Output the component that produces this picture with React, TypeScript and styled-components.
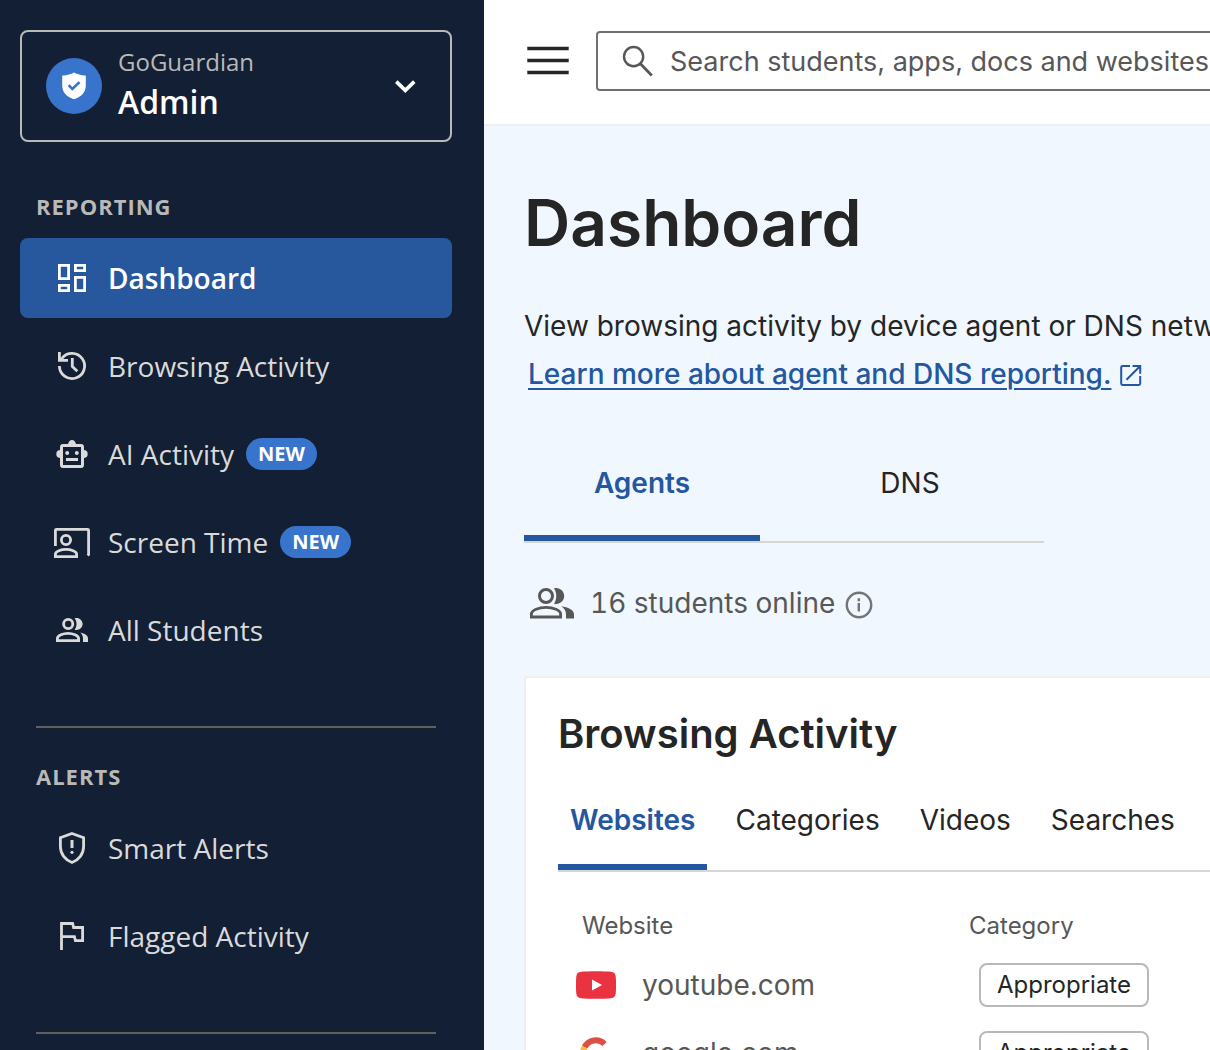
import React from "react";
import styled, { createGlobalStyle, css } from "styled-components";

const color = {
  navy: "#131f34",
  navyActive: "#27589d",
  badge: "#3874cb",
  sideText: "#dadada",
  sideMuted: "#b9b9b7",
  sideLine: "#5f5f5d",
  page: "#f0f7ff",
  ink: "#252525",
  soft: "#575757",
  link: "#24579f",
  line: "#d6d6d6",
};

const sideFont = `"Open Sans", "Noto Sans", sans-serif`;
const mainFont = `Inter, "Liberation Sans", sans-serif`;

const GlobalStyle = createGlobalStyle`
  *, *::before, *::after { box-sizing: border-box; }
  body { margin: 0; background: ${color.page}; }
  h1, h2, p, ul { margin: 0; padding: 0; }
  ul { list-style: none; }
  button { background: none; border: 0; padding: 0; font: inherit; color: inherit; cursor: pointer; }
  svg { display: block; flex: none; }
`;

const Shell = styled.div`
  display: flex;
  height: 100vh;
  overflow: hidden;
`;

/* Sidebar */

const Sidebar = styled.aside`
  flex: none;
  width: 484px;
  padding: 30px 32px 0 20px;
  overflow: hidden;
  background: ${color.navy};
  color: ${color.sideText};
  font-family: ${sideFont};
`;

const Switcher = styled.button`
  display: flex;
  align-items: center;
  gap: 16px;
  width: 100%;
  height: 112px;
  padding: 0 24px;
  border: 2px solid ${color.sideMuted};
  border-radius: 8px;
  text-align: left;
`;

const SwitcherText = styled.span`
  display: flex;
  flex: 1;
  flex-direction: column;
  padding-bottom: 4px;
`;

const Brand = styled.span`
  color: ${color.sideMuted};
  font-size: 24px;
  line-height: 36px;
`;

const Product = styled.span`
  color: #fff;
  font-size: 32px;
  font-weight: 600;
  line-height: 44px;
`;

const Section = styled.section<{ $first?: boolean }>`
  padding-top: ${(p) => (p.$first ? "48px" : "32px")};
`;

const SectionLabel = styled.h2`
  margin-bottom: 16px;
  padding-left: 16px;
  color: ${color.sideMuted};
  font-size: 22px;
  font-weight: 700;
  letter-spacing: 1px;
  line-height: 32px;
  text-transform: uppercase;
`;

const NavList = styled.ul`
  display: flex;
  flex-direction: column;
  gap: 8px;
`;

const NavLink = styled.a<{ $active?: boolean }>`
  display: flex;
  align-items: center;
  gap: 16px;
  height: 80px;
  padding: 0 32px;
  border-radius: 8px;
  color: inherit;
  font-size: 28px;
  line-height: 40px;
  text-decoration: none;
  white-space: nowrap;
  ${(p) =>
    p.$active &&
    css`
      background: ${color.navyActive};
      color: #fff;
      font-weight: 600;
    `}
`;

const NavLabel = styled.span`
  display: flex;
  align-items: center;
  gap: 12px;
`;

const NewBadge = styled.span`
  padding: 0 12px;
  border-radius: 16px;
  background: ${color.badge};
  color: #fff;
  font-size: 20px;
  font-weight: 700;
  line-height: 32px;
`;

const Divider = styled.hr`
  height: 2px;
  margin: 56px 16px 0;
  border: 0;
  background: ${color.sideLine};
`;

/* Main column */

const Main = styled.div`
  flex: 1;
  min-width: 0;
  overflow: hidden;
  background: ${color.page};
  color: ${color.ink};
  font-family: ${mainFont};
  font-size: 28px;
`;

const TopBar = styled.header`
  display: flex;
  align-items: center;
  gap: 24px;
  min-width: 1000px;
  padding: 31px 40px 33px;
  border-bottom: 2px solid #eeefef;
  background: #fff;
`;

const SearchBox = styled.label`
  display: flex;
  flex: 1;
  align-items: center;
  gap: 16px;
  height: 60px;
  padding: 0 24px;
  border: 2px solid #707070;
  border-radius: 4px;
  color: ${color.soft};
`;

const SearchInput = styled.input`
  flex: 1;
  min-width: 0;
  padding: 0;
  border: 0;
  outline: 0;
  background: none;
  color: ${color.ink};
  font: 27px ${mainFont};
  &::placeholder {
    color: ${color.soft};
    opacity: 1;
  }
`;

const Content = styled.main`
  min-width: 1000px;
  padding: 53px 40px;
`;

const PageTitle = styled.h1`
  font-size: 64px;
  font-weight: 600;
  line-height: 88px;
`;

const Intro = styled.p`
  margin-top: 35px;
  line-height: 48px;
`;

const LearnMore = styled.a`
  display: inline-flex;
  align-items: center;
  gap: 8px;
  margin-left: 4px;
  color: ${color.link};
  font-weight: 500;
  text-decoration: underline;
  text-decoration-thickness: 2px;
  text-underline-offset: 4px;
`;

const TabBar = styled.div<{ $wide?: boolean }>`
  display: flex;
  gap: ${(p) => (p.$wide ? "32px" : "16px")};
  width: ${(p) => (p.$wide ? "520px" : "auto")};
  margin-top: ${(p) => (p.$wide ? "49px" : "42px")};
  border-bottom: 2px solid ${color.line};
`;

const Tab = styled.button<{ $active?: boolean; $wide?: boolean }>`
  width: ${(p) => (p.$wide ? "236px" : "auto")};
  padding: ${(p) => (p.$wide ? "16px 12px 32px" : "0 12px 24px")};
  border-bottom: 6px solid transparent;
  line-height: 40px;
  ${(p) =>
    p.$active &&
    css`
      border-color: ${color.link};
      color: ${color.link};
      font-weight: 600;
    `}
`;

const Online = styled.div`
  display: flex;
  align-items: center;
  gap: 8px;
  margin-top: 36px;
  padding-left: 4px;
  color: ${color.soft};
  line-height: 48px;
`;

const OnlineCount = styled.span`
  padding-left: 6px;
  font-variant-numeric: tabular-nums;
`;

const Card = styled.section`
  margin-top: 49px;
  padding: 32px;
  border: 2px solid #eeefef;
  border-radius: 4px;
  background: #fff;
`;

const CardTitle = styled.h2`
  font-size: 40px;
  font-weight: 600;
  line-height: 48px;
`;

const Table = styled.table`
  width: 100%;
  margin-top: 28px;
  border-collapse: collapse;
  table-layout: fixed;
  color: ${color.soft};
  text-align: left;
`;

const HeadCell = styled.th<{ $first?: boolean }>`
  width: ${(p) => (p.$first ? "403px" : "auto")};
  height: 51px;
  padding: 0 0 0 ${(p) => (p.$first ? "24px" : "8px")};
  font-size: 24px;
  font-weight: 400;
`;

const Cell = styled.td`
  height: 68px;
  padding: 0 0 0 18px;
`;

const Site = styled.span`
  display: flex;
  align-items: center;
  gap: 26px;
`;

const CategoryTag = styled.button`
  height: 44px;
  padding: 0 16px;
  border: 2px solid #b9b9b9;
  border-radius: 8px;
  color: ${color.ink};
  font-size: 24px;
  line-height: 40px;
  vertical-align: middle;
`;

/* Icons */

type IconProps = { children: React.ReactNode; size?: number; width?: number; stroke?: number };

const Icon = ({ children, size = 40, width, stroke = 2.8 }: IconProps) => (
  <svg
    width={width ?? size}
    height={size}
    viewBox={`0 0 ${width ?? size} ${size}`}
    fill="none"
    stroke="currentColor"
    strokeWidth={stroke}
    aria-hidden="true"
  >
    {children}
  </svg>
);

const LogoIcon = () => (
  <Icon size={56}>
    <circle cx="28" cy="28" r="28" fill={color.badge} stroke="none" />
    <path
      d="M28 14.5c3.2 2 7 2.700 11 2.900.6 0 .8.4.8 1v8.800c0 7.200-4.400 11.600-11.800 14-7.400-2.400-11.800-6.800-11.800-14v-8.800c0-.6.2-1 .8-1C21 17.200 24.800 16.500 28 14.500z"
      fill="#fff"
      stroke="none"
    />
    <path d="M22.600 27.200l3.700 3.700 7.200-6.800" stroke={color.badge} strokeWidth="2.600" />
  </Icon>
);

const ChevronIcon = () => (
  <Icon stroke={3.6}>
    <path d="M10.300 15.600L19.300 24.400L28.300 15.600" stroke="#fff" />
  </Icon>
);

const DashboardIcon = () => (
  <Icon>
    <path d="M7.400 7.400h9.200v13.200h-9.200zM23.400 7.400h9.200v5.200h-9.200zM23.400 19.400h9.200v13.200h-9.200zM7.400 27.400h9.200v5.200h-9.200z" />
  </Icon>
);

const HistoryIcon = () => (
  <Icon>
    <path d="M7.400 20A12.600 12.600 0 1 0 10 12.300" />
    <path d="M6 6h2.800v5.200l2.400 1.800H16v2.800H6z" fill="currentColor" stroke="none" />
    <path d="M20.300 12v8.400l5 4.800" />
  </Icon>
);

const RobotIcon = () => (
  <Icon>
    <rect x="9.500" y="11.500" width="21" height="21" rx="1.500" stroke="currentColor" strokeWidth="3" />
    <path
      d="M16 10.500a4 4.400 0 0 1 8 0zM8.500 16a4.200 4 0 0 0 0 8zM31.500 16a4.200 4 0 0 1 0 8z"
      fill="currentColor"
      stroke="none"
    />
    <circle cx="15.200" cy="19" r="2" fill="currentColor" stroke="none" />
    <circle cx="24.800" cy="19" r="2" fill="currentColor" stroke="none" />
    <path d="M14 25.500h12" strokeWidth="3" />
  </Icon>
);

const ScreenIcon = () => (
  <Icon>
    <path d="M3.400 24V8.400a1 1 0 0 1 1-1h31.200a1 1 0 0 1 1 1V32.500l-1 1" />
    <circle cx="14" cy="18" r="4.600" />
    <path d="M3.400 34.600v-2.400c0-3 5.800-4.800 10.600-4.800s10.600 1.800 10.600 4.800v2.400z" />
  </Icon>
);

const StudentsIcon = () => (
  <Icon>
    <circle cx="16.200" cy="14" r="4.600" />
    <path d="M5.400 30.600v-2c0-3.200 5.800-5.200 10.600-5.200s10.600 2 10.600 5.200v2z" />
    <path
      d="M22.600 8.300c4.200-1.200 8 1.800 8 5.700s-3.800 6.900-8 5.700c2.600-3.200 2.600-8.200 0-11.400zM28.200 22.600c4.600 1 7.800 2.800 7.800 6v3.400h-5v-3.400c0-2.200-1-4.400-2.800-6z"
      fill="currentColor"
      stroke="none"
    />
  </Icon>
);

const ShieldIcon = () => (
  <Icon>
    <path d="M20 5.500L31.600 9.800V18.500c0 7.400-4.800 13.400-11.600 16-6.800-2.600-11.600-8.600-11.600-16V9.800z" />
    <path d="M20 12v8" strokeWidth="3" />
    <circle cx="20" cy="24.300" r="1.600" fill="currentColor" stroke="none" />
  </Icon>
);

const FlagIcon = () => (
  <Icon>
    <path d="M9.500 34V7.500H20.600L21.600 11.500H30.600V24.600H23.400L22.400 20.600H9.500" />
  </Icon>
);

const MenuIcon = () => (
  <Icon size={48} stroke={3.4}>
    <path d="M3.300 11.500h41.400M3.300 23.500h41.400M3.300 35.500h41.400" />
  </Icon>
);

const SearchIcon = () => (
  <Icon size={32} stroke={2.4}>
    <circle cx="11.600" cy="11.600" r="9.600" />
    <path d="M18.400 18.800L29.800 30.400" stroke="currentColor" strokeWidth="2.800" />
  </Icon>
);

const OpenIcon = () => (
  <Icon size={24} stroke={2}>
    <path d="M11 4H3.600a1.400 1.400 0 0 0-1.400 1.400V21.600a1.400 1.400 0 0 0 1.400 1.400H19.800a1.400 1.400 0 0 0 1.400-1.400V14" />
    <path d="M13.500 4H21.200V11.700M21 4.200L7.500 17.700" />
  </Icon>
);

const PeopleIcon = () => (
  <Icon size={48}>
    <circle cx="18" cy="17" r="6.500" strokeWidth="3" />
    <path d="M3.400 38v-3c0-4 7.600-6.600 14.600-6.600s14.600 2.600 14.600 6.600v3z" />
    <path
      d="M26 9.300c5.400-1.400 10.200 2.700 10.200 7.700s-4.800 9.100-10.200 7.700c3-4.400 3-11 0-15.400zM33.200 27.300c6.800 1 12.800 3.700 12.800 8v4.100h-8v-4.100c0-3.400-1.800-6-4.800-8z"
      fill="currentColor"
      stroke="none"
    />
  </Icon>
);

const InfoIcon = () => (
  <Icon size={32} stroke={2.4}>
    <circle cx="16" cy="18" r="12.200" stroke="#747474" />
    <path d="M15.800 16v8.500M15.800 11.300v3" stroke="#747474" />
  </Icon>
);

const YoutubeIcon = () => (
  <svg width="40" height="28" viewBox="0 0 40 28" aria-hidden="true">
    <path
      d="M5 .8C12 0 28 0 35 .8c3 .3 4.400 1.600 4.700 4.600.5 5.600.5 11.600 0 17.200-.3 3-1.700 4.300-4.700 4.600-7 .8-23 .8-30 0-3-.3-4.400-1.600-4.700-4.600-.5-5.600-.5-11.600 0-17.200C.6 2.400 2 1.100 5 .8z"
      fill="#ea3340"
    />
    <path d="M16 8.500L26 14L16 19.500z" fill="#fff" />
  </svg>
);

const GoogleIcon = () => (
  <svg width="40" height="32" viewBox="0 0 40 32" fill="none" strokeWidth="6" aria-hidden="true">
    <path d="M8.600 10.200A12.500 12.500 0 0 1 28.600 7" stroke="#dd5144" />
    <path d="M8.600 21.800A12.500 12.500 0 0 1 8.600 10.200" stroke="#f2bf42" />
    <path d="M28 25.500A12.500 12.500 0 0 1 8.600 21.800" stroke="#58a55c" />
    <path d="M20 16.200h12.400c0 4-1.600 7.200-4.400 9.300" stroke="#5383ec" />
  </svg>
);

/* Data */

const reporting = [
  { label: "Dashboard", icon: <DashboardIcon />, active: true },
  { label: "Browsing Activity", icon: <HistoryIcon /> },
  { label: "AI Activity", icon: <RobotIcon />, isNew: true },
  { label: "Screen Time", icon: <ScreenIcon />, isNew: true },
  { label: "All Students", icon: <StudentsIcon /> },
];

const alerts = [
  { label: "Smart Alerts", icon: <ShieldIcon /> },
  { label: "Flagged Activity", icon: <FlagIcon /> },
];

const activityTabs = ["Websites", "Categories", "Videos", "Searches"];

const sites = [
  { name: "youtube.com", icon: <YoutubeIcon />, category: "Appropriate" },
  { name: "google.com", icon: <GoogleIcon />, category: "Appropriate" },
];

type NavEntry = { label: string; icon: React.ReactNode; active?: boolean; isNew?: boolean };

const Nav = ({ items }: { items: NavEntry[] }) => (
  <NavList>
    {items.map((item) => (
      <li key={item.label}>
        <NavLink href="#" $active={item.active} aria-current={item.active ? "page" : undefined}>
          {item.icon}
          <NavLabel>
            {item.label}
            {item.isNew && <NewBadge>NEW</NewBadge>}
          </NavLabel>
        </NavLink>
      </li>
    ))}
  </NavList>
);

export default function App() {
  return (
    <Shell>
      <GlobalStyle />
      <Sidebar>
        <Switcher type="button" aria-haspopup="menu">
          <LogoIcon />
          <SwitcherText>
            <Brand>GoGuardian</Brand>
            <Product>Admin</Product>
          </SwitcherText>
          <ChevronIcon />
        </Switcher>
        <Section $first>
          <SectionLabel>Reporting</SectionLabel>
          <Nav items={reporting} />
        </Section>
        <Divider />
        <Section>
          <SectionLabel>Alerts</SectionLabel>
          <Nav items={alerts} />
        </Section>
        <Divider />
      </Sidebar>
      <Main>
        <TopBar>
          <button type="button" aria-label="Toggle menu">
            <MenuIcon />
          </button>
          <SearchBox>
            <SearchIcon />
            <SearchInput
              type="text"
              aria-label="Search"
              placeholder="Search students, apps, docs and websites"
            />
          </SearchBox>
        </TopBar>
        <Content>
          <PageTitle>Dashboard</PageTitle>
          <Intro>
            View browsing activity by device agent or DNS network.
            <br />
            <LearnMore href="#">
              Learn more about agent and DNS reporting.
              <OpenIcon />
            </LearnMore>
          </Intro>
          <TabBar $wide role="tablist">
            <Tab type="button" role="tab" aria-selected $wide $active>
              Agents
            </Tab>
            <Tab type="button" role="tab" aria-selected={false} $wide>
              DNS
            </Tab>
          </TabBar>
          <Online>
            <PeopleIcon />
            <OnlineCount>16 students online</OnlineCount>
            <button type="button" aria-label="About students online">
              <InfoIcon />
            </button>
          </Online>
          <Card>
            <CardTitle>Browsing Activity</CardTitle>
            <TabBar role="tablist">
              {activityTabs.map((name, i) => (
                <Tab key={name} type="button" role="tab" aria-selected={i === 0} $active={i === 0}>
                  {name}
                </Tab>
              ))}
            </TabBar>
            <Table>
              <thead>
                <tr>
                  <HeadCell scope="col" $first>
                    Website
                  </HeadCell>
                  <HeadCell scope="col">Category</HeadCell>
                </tr>
              </thead>
              <tbody>
                {sites.map((site) => (
                  <tr key={site.name}>
                    <Cell>
                      <Site>
                        {site.icon}
                        {site.name}
                      </Site>
                    </Cell>
                    <Cell>
                      <CategoryTag type="button">{site.category}</CategoryTag>
                    </Cell>
                  </tr>
                ))}
              </tbody>
            </Table>
          </Card>
        </Content>
      </Main>
    </Shell>
  );
}
